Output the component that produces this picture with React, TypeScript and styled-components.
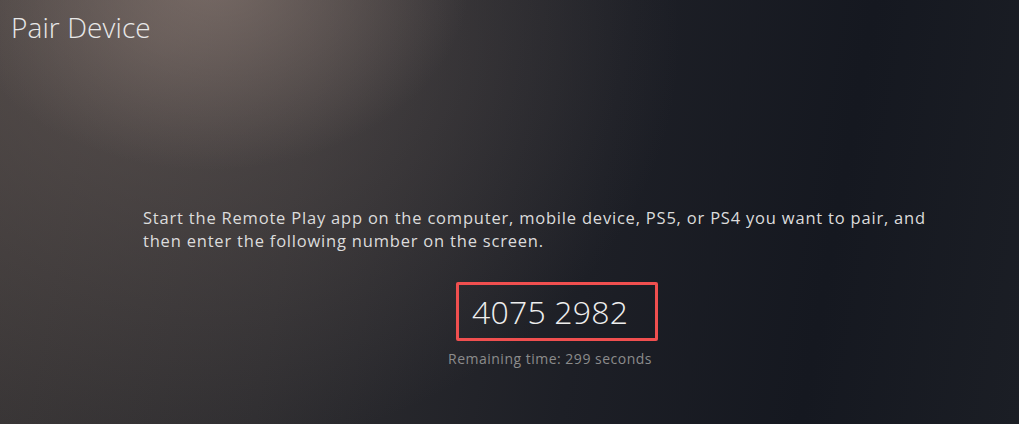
import React from 'react';
import styled, { createGlobalStyle } from 'styled-components';

const GlobalStyle = createGlobalStyle`
    html, body {
        margin: 0;
        padding: 0;
        background: #15181f;
    }
    body {
        font-family: "Open Sans", "Noto Sans", "Liberation Sans", sans-serif;
    }
`;

const Screen = styled.div`
    width: 1019px;
    height: 424px;
    overflow: hidden;
    display: flex;
    flex-direction: column;
    box-sizing: border-box;
    padding: 8px 0 0 11px;
    color: #e6e6e6;
    background:
        radial-gradient(ellipse 260px 190px at 210px -20px, rgba(150, 132, 124, 0.55), rgba(150, 132, 124, 0) 100%),
        radial-gradient(ellipse 520px 420px at 160px 40px, rgba(110, 98, 94, 0.55), rgba(110, 98, 94, 0) 100%),
        linear-gradient(100deg, #3b3737 0%, #2e2d30 30%, #1d1f26 58%, #151820 80%, #1b1e25 100%);
`;

const Title = styled.h1`
    margin: 0;
    font-size: 28px;
    font-weight: 300;
    line-height: 38px;
    letter-spacing: 0.1px;
    color: #e8e8e8;
`;

const Content = styled.div`
    display: flex;
    flex-direction: column;
    width: 828px;
    margin: 160px 0 0 132px;
`;

const Message = styled.p`
    margin: 0;
    font-size: 16.5px;
    line-height: 23px;
    letter-spacing: 0.8px;
    font-weight: 400;
    color: #dcdcdc;
`;

const CodeBlock = styled.div`
    display: flex;
    flex-direction: column;
    align-items: center;
    margin-top: 30px;
`;

const CodeBox = styled.div`
    box-sizing: border-box;
    width: 202px;
    height: 59px;
    border: 3px solid #f04f4f;
    border-radius: 2px;
    display: flex;
    align-items: center;
    padding-left: 13px;
`;

const Code = styled.span`
    font-size: 32px;
    font-weight: 300;
    color: #eeeeee;
    letter-spacing: 0.2px;
`;

const Remaining = styled.span`
    margin: 8px 14px 0 0;
    font-size: 14px;
    letter-spacing: 0.5px;
    color: #8c8c8c;
`;

export default function App() {
    return (
        <>
            <GlobalStyle />
            <Screen>
                <Title>Pair Device</Title>
                <Content>
                    <Message>
                        Start the Remote Play app on the computer, mobile device, PS5, or PS4 you want to pair, and
                        <br />
                        then enter the following number on the screen.
                    </Message>
                    <CodeBlock>
                        <CodeBox>
                            <Code>4075 2982</Code>
                        </CodeBox>
                        <Remaining>Remaining time: 299 seconds</Remaining>
                    </CodeBlock>
                </Content>
            </Screen>
        </>
    );
}
